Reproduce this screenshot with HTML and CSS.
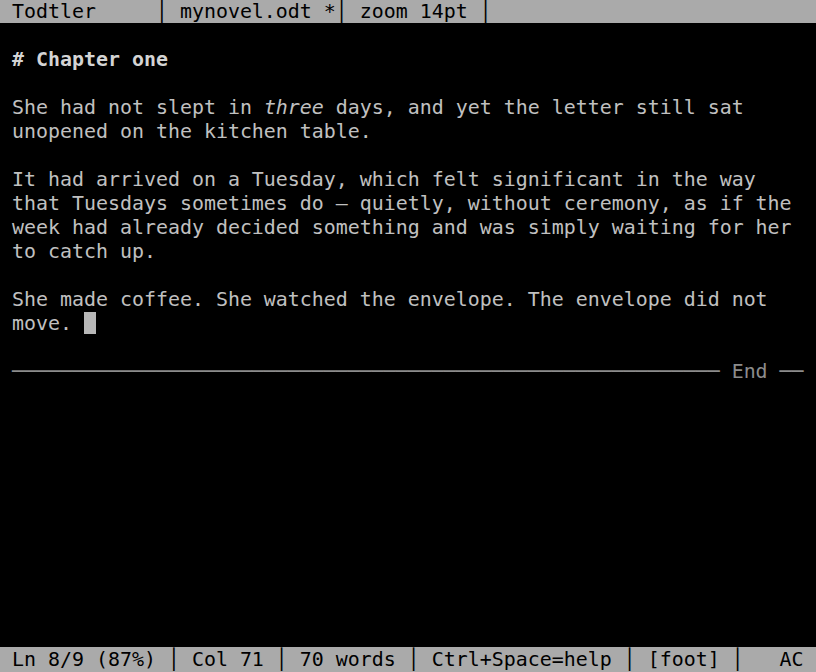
FILE: index.html
```html
<!DOCTYPE html>
<html>
<head>
<meta charset="utf-8">
<title>Todtler</title>
<link rel="stylesheet" href="styles.css">
</head>
<body>
<div class="term">
  <div class="bar top"> Todtler     │ mynovel.odt *│ zoom 14pt │</div>
  <div class="doc">
    <div class="ln"></div>
    <div class="ln head"> # Chapter one</div>
    <div class="ln"></div>
    <div class="ln"> She had not slept in <i>three</i> days, and yet the letter still sat</div>
    <div class="ln"> unopened on the kitchen table.</div>
    <div class="ln"></div>
    <div class="ln"> It had arrived on a Tuesday, which felt significant in the way</div>
    <div class="ln"> that Tuesdays sometimes do — quietly, without ceremony, as if the</div>
    <div class="ln"> week had already decided something and was simply waiting for her</div>
    <div class="ln"> to catch up.</div>
    <div class="ln"></div>
    <div class="ln"> She made coffee. She watched the envelope. The envelope did not</div>
    <div class="ln"> move. <span class="cursor"> </span></div>
    <div class="ln"></div>
    <div class="ln rule"> ─────────────────────────────────────────────────────────── End ──</div>
  </div>
  <div class="bar bottom"> Ln 8/9 (87%) │ Col 71 │ 70 words │ Ctrl+Space=help │ [foot] │   AC </div>
</div>
</body>
</html>
```
FILE: styles.css
```css
html, body {
  margin: 0;
  padding: 0;
  background: #000;
}
.term {
  width: 816px;
  height: 672px;
  display: flex;
  flex-direction: column;
  overflow: hidden;
  font-family: "DejaVu Sans Mono", monospace;
  font-size: 19.93px;
  line-height: 24px;
  color: #c0c0c0;
  background: #000;
}
.bar {
  background: #aaaaaa;
  color: #000;
  white-space: pre;
  overflow: hidden;
}
.top {
  height: 23px;
  line-height: 23px;
}
.doc {
  flex: 1;
  overflow: hidden;
}
.ln {
  height: 24px;
  box-sizing: border-box;
  padding-top: 1px;
  white-space: pre;
}
.head {
  font-weight: bold;
  color: #d4d4d4;
}
.ln i {
  font-style: italic;
}
.cursor {
  display: inline-block;
  width: 12px;
  height: 22px;
  vertical-align: top;
  background: #b8b8b8;
}
.rule {
  color: #8c8c8c;
}
.bottom {
  height: 25px;
  line-height: 25px;
}
```
